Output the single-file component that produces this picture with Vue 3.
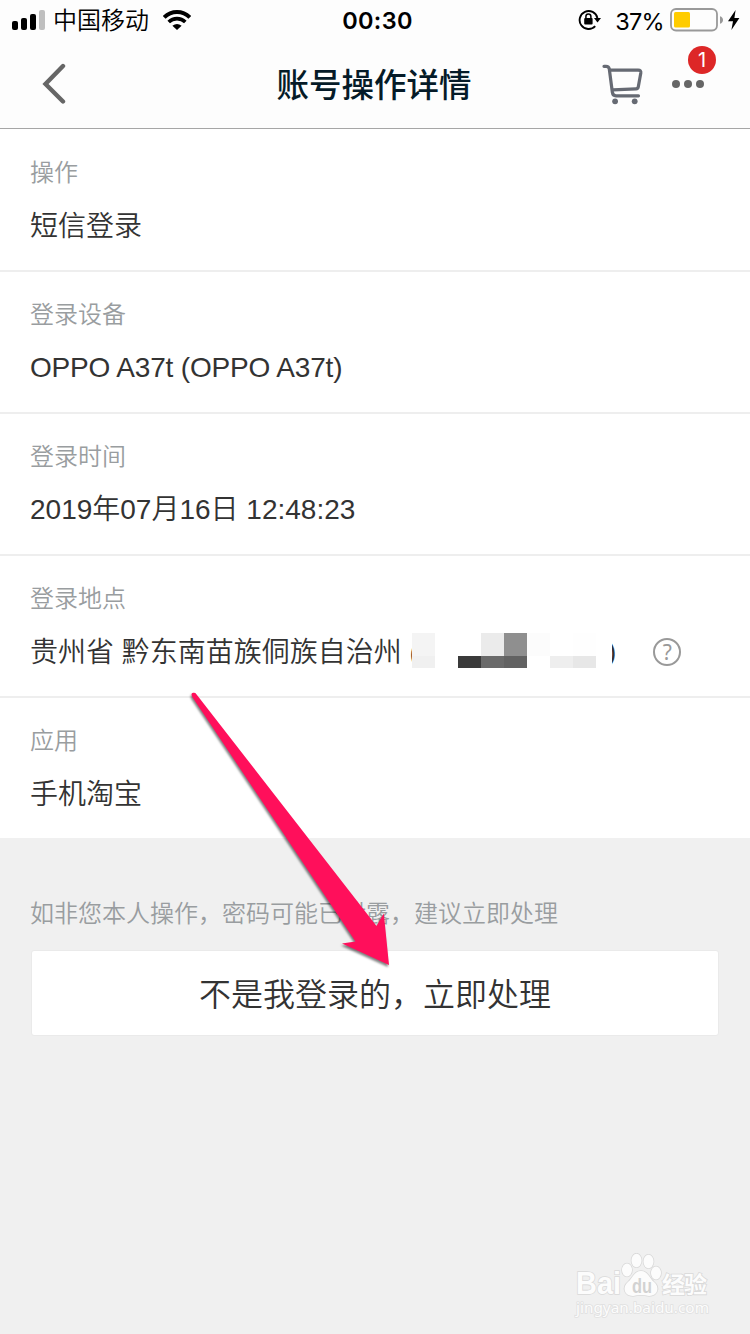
<template>
  <div class="page">
    <header class="header">
      <div class="status-bar">
        <div class="status-left">
          <svg class="signal" width="34" height="20" viewBox="0 0 34 20">
            <rect x="0" y="11" width="6" height="9" rx="2" />
            <rect x="9" y="8" width="6" height="12" rx="2" />
            <rect x="18" y="4" width="6" height="16" rx="2" />
            <rect x="27" y="0" width="6" height="20" rx="2" fill="#bfbfbf" />
          </svg>
          <span class="carrier">中国移动</span>
          <svg class="wifi" width="28" height="20" viewBox="0 0 28 20">
            <path d="M1.2 7.4 A18 18 0 0 1 26.8 7.4" fill="none" stroke="#000" stroke-width="3.9" />
            <path d="M5.7 12 A11.8 11.8 0 0 1 22.3 12" fill="none" stroke="#000" stroke-width="3.6" />
            <path d="M14 20 L9.4 15.7 Q14 12.2 18.6 15.7 Z" />
          </svg>
        </div>
        <span class="clock">00:30</span>
        <div class="status-right">
          <svg class="lock" width="24" height="22" viewBox="0 0 24 22">
            <path d="M17.2 17.2 A9 9 0 1 1 19.4 9" fill="none" stroke="#000" stroke-width="1.9" />
            <path d="M16 9 H23 L19.5 13.6 Z" />
            <rect x="6.2" y="9" width="8.4" height="6.5" rx="1" />
            <path d="M7.9 9.5 V7.6 A2.5 2.5 0 0 1 12.9 7.6 V9.5" fill="none" stroke="#000" stroke-width="1.5" />
          </svg>
          <span class="percent">37%</span>
          <svg class="battery" width="53" height="24" viewBox="0 0 53 24">
            <rect x="1" y="1" width="46" height="21.5" rx="5" fill="none" stroke="#999" stroke-width="1.8" />
            <rect x="4" y="4" width="16" height="15.5" rx="1.5" fill="#fc0" />
            <path d="M50 8.2 Q53 9.2 53 12 Q53 14.8 50 15.8 Z" fill="#999" />
          </svg>
          <svg class="bolt" width="12" height="20" viewBox="0 0 12 20">
            <path d="M7.6 0 L0 11.2 H5 L3.4 20 L11.4 8 H6.4 Z" />
          </svg>
        </div>
      </div>
      <div class="nav-bar">
        <svg class="back" width="24" height="42" viewBox="0 0 24 42">
          <path d="M21 3 L3.5 21 L21 38.5" fill="none" stroke="#666" stroke-width="4.4" stroke-linecap="round" />
        </svg>
        <h1 class="title">账号操作详情</h1>
        <div class="nav-actions">
          <svg class="cart" width="42" height="42" viewBox="0 0 42 42" fill="none" stroke="#666a73" stroke-width="3.2" stroke-linecap="round" stroke-linejoin="round">
            <path d="M2 3.3 H4 Q6.8 3.3 7.3 6 L10.3 29 Q10.8 32.8 14 32.8 H36.5" />
            <path d="M8 7.2 H36.2 Q39.2 7.2 38.8 10 L36.3 23.8 Q36 25.8 34 25.9 L11 26.8" />
            <circle cx="13.1" cy="38.3" r="2.9" fill="#666a73" stroke="none" />
            <circle cx="32.7" cy="38.3" r="2.9" fill="#666a73" stroke="none" />
          </svg>
          <div class="more">
            <i></i><i></i><i></i>
            <span class="badge">1</span>
          </div>
        </div>
      </div>
    </header>

    <section class="details">
      <div v-for="item in details" :key="item.label" class="row">
        <div class="label">{{ item.label }}</div>
        <div class="value" :class="item.type">
          <span>{{ item.value }}</span>
          <template v-if="item.type === 'masked'">
            <div class="mosaic">
              <i v-for="(color, i) in mosaic" :key="i" :style="{ backgroundColor: color }"></i>
            </div>
            <span class="paren">)</span>
            <span class="help">?</span>
          </template>
        </div>
      </div>
    </section>

    <section class="action">
      <p class="tip">如非您本人操作，密码可能已泄露，建议立即处理</p>
      <button class="submit">不是我登录的，立即处理</button>
    </section>

    <svg class="arrow" width="220" height="290" viewBox="0 0 220 290">
      <path d="M11.5 14.5 Q11.5 12.5 13.6 12.8 Q15.4 12.6 16.4 14.2 L196.5 246 L203.8 233.5 L209 285 L162 263.5 L175.5 261.5 L12.3 17 Z" fill="#ff0f5b" />
    </svg>

    <div class="watermark">
      <svg width="140" height="66" viewBox="0 0 140 66">
        <g class="ink">
          <text x="2" y="41" class="brand" textLength="45" lengthAdjust="spacingAndGlyphs">Bai</text>
          <ellipse cx="53" cy="17" rx="5" ry="6.5" />
          <ellipse cx="62.5" cy="7.5" rx="5" ry="6.8" />
          <ellipse cx="74.5" cy="8.5" rx="5" ry="6.8" />
          <ellipse cx="82" cy="20" rx="5" ry="6.5" />
          <path d="M67 18 C60 18 59 25 54 29 C48 34 50 43 59 43 Q67 41 75 43 C84 43 86 34 80 29 C75 25 74 18 67 18 Z" />
          <text x="88" y="39.5" class="cn" textLength="45">经验</text>
          <text x="2" y="60" class="site" textLength="133" lengthAdjust="spacingAndGlyphs">jingyan.baidu.com</text>
        </g>
        <text x="58" y="39.5" class="du" textLength="20" lengthAdjust="spacingAndGlyphs">du</text>
      </svg>
    </div>
  </div>
</template>

<script setup>
const details = [
  { label: '操作', value: '短信登录' },
  { label: '登录设备', value: 'OPPO A37t (OPPO A37t)', type: 'device' },
  { label: '登录时间', value: '2019年07月16日 12:48:23', type: 'time' },
  { label: '登录地点', value: '贵州省 黔东南苗族侗族自治州 (', type: 'masked' },
  { label: '应用', value: '手机淘宝' },
];

// цвета мозаики: два ряда по девять клеток
const mosaic = [
  '#f4f4f4', '#fff', '#fff', '#ebebeb', '#8f8f8f', '#fcfcfc', '#fff', '#fefefe', '#fff',
  '#f0f0f0', '#fff', '#3a3a3a', '#6a6a6a', '#626262', '#fff', '#eeeeee', '#e7e7e7', '#fff',
];
</script>

<style>
body {
  background: #f0f0f0;
}
</style>

<style scoped>
.page {
  position: relative;
  box-sizing: border-box;
  width: 750px;
  height: 1334px;
  overflow: hidden;
  background: #f0f0f0;
  color: #333;
  font-family: "Liberation Sans", "Noto Sans CJK SC", sans-serif;
  font-weight: 350;
}

.header {
  box-sizing: border-box;
  height: 129px;
  background: #fdfdfd;
  border-bottom: 1px solid #a6a6a6;
}

.status-bar {
  display: grid;
  grid-template-columns: 1fr auto 1fr;
  align-items: center;
  height: 40px;
  padding: 0 10px 0 12px;
  color: #000;
}

.status-left,
.status-right {
  display: flex;
  align-items: center;
}

.status-right {
  justify-content: flex-end;
}

.carrier {
  margin: 2px 14px 0 7px;
  font-size: 24px;
  line-height: 38px;
}

.clock {
  margin-left: 3px;
  font-family: Inter, sans-serif;
  font-size: 23.5px;
  font-weight: 600;
  letter-spacing: 0.3px;
}

.percent {
  margin: 2px 6px 0 13px;
  font-family: Inter, sans-serif;
  font-size: 23.5px;
  font-weight: 400;
  letter-spacing: -0.7px;
}

.bolt {
  margin-left: 5px;
}

.nav-bar {
  display: grid;
  grid-template-columns: 1fr auto 1fr;
  align-items: center;
  height: 88px;
  padding: 0 46px 0 42px;
}

.title {
  margin: 3px 0 0 2px;
  color: #051b28;
  font-size: 32.5px;
  font-weight: 500;
  line-height: 48px;
}

.nav-actions {
  display: flex;
  align-items: center;
  justify-content: flex-end;
  gap: 28px;
}

.more {
  position: relative;
  display: flex;
  gap: 4px;
}

.more i {
  width: 8px;
  height: 8px;
  border-radius: 50%;
  background: #666;
}

.badge {
  position: absolute;
  top: -34px;
  left: 16px;
  width: 28px;
  height: 28px;
  border-radius: 50%;
  background: #dd2727;
  color: #fff;
  font-family: Inter, sans-serif;
  font-size: 20px;
  font-weight: 400;
  line-height: 28px;
  text-align: center;
}

.details {
  padding-top: 1px;
  background: #fff;
}

.row {
  box-sizing: border-box;
  height: 142px;
  padding: 25px 30px 0;
  border-bottom: 2px solid #eee;
}

.row:last-child {
  height: 140px;
  border-bottom: none;
}

.label {
  color: #999da0;
  font-size: 24px;
  line-height: 36px;
}

.value {
  display: flex;
  align-items: center;
  height: 40px;
  margin-top: 16px;
  font-size: 28px;
  line-height: 40px;
  white-space: pre;
}

.value.device,
.value.time {
  margin-top: 15px;
}

.value.device {
  letter-spacing: -0.17px;
}

.mosaic {
  z-index: 1;
  display: grid;
  grid-template-columns: repeat(8, 23px) 16px;
  grid-template-rows: 23px 12px;
  margin: -6px 0 0 -7px;
}

.paren {
  margin: -3px 0 0 -5px;
}

.help {
  box-sizing: border-box;
  width: 28px;
  height: 28px;
  margin: -2px 0 0 37px;
  border: 2px solid #999;
  border-radius: 50%;
  color: #999;
  font-family: "Noto Sans", sans-serif;
  font-size: 21px;
  font-weight: 400;
  line-height: 24px;
  text-align: center;
}

.action {
  padding: 58px 31px 0;
}

.tip {
  margin: 0 0 0 -1px;
  color: #999da0;
  font-size: 24px;
  line-height: 36px;
}

.submit {
  display: block;
  width: 688px;
  height: 86px;
  margin-top: 18px;
  padding: 0 0 2px;
  border: 1px solid #eaeaea;
  border-radius: 3px;
  background: #fff;
  color: #333;
  font-family: inherit;
  font-size: 32px;
  font-weight: inherit;
}

.arrow {
  position: absolute;
  top: 680px;
  left: 180px;
  filter: drop-shadow(-1px 2px 1px rgba(0, 0, 0, 0.5));
}

.watermark {
  position: absolute;
  top: 1253px;
  left: 574px;
}

.ink {
  fill: #fcfcfc;
  stroke: #d9d9d9;
  stroke-width: 1.6px;
  paint-order: stroke;
}

.brand {
  font-size: 32px;
  font-weight: 700;
}

.cn {
  font-size: 23px;
  font-weight: 700;
}

.site {
  font-family: "Noto Sans", sans-serif;
  font-size: 15px;
  font-weight: 400;
  stroke: #e0e0e0;
}

.du {
  fill: #d2d2d2;
  font-size: 20px;
  font-weight: 700;
}
</style>
